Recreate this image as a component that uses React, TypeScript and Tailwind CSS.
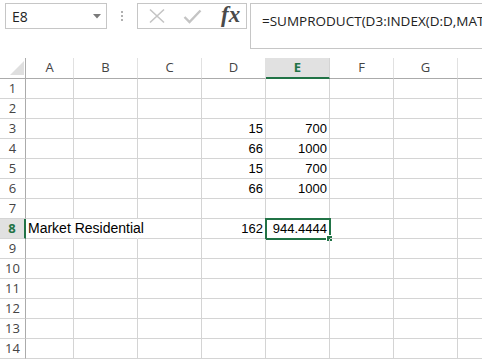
import React from "react";

const cols = ["A", "B", "C", "D", "E", "F", "G", "H"];
const widths = [48, 64, 64, 64, 64, 64, 64, 64];

type Cell = { text: string; align?: "left" | "right" };
const data: Record<number, Record<string, Cell>> = {
  3: { D: { text: "15", align: "right" }, E: { text: "700", align: "right" } },
  4: { D: { text: "66", align: "right" }, E: { text: "1000", align: "right" } },
  5: { D: { text: "15", align: "right" }, E: { text: "700", align: "right" } },
  6: { D: { text: "66", align: "right" }, E: { text: "1000", align: "right" } },
  8: {
    A: { text: "Market Residential", align: "left" },
    D: { text: "162", align: "right" },
    E: { text: "944.4444", align: "right" },
  },
};

const hdrFont = { fontFamily: '"Open Sans", "Noto Sans", sans-serif' };
const cellFont = { fontFamily: '"Liberation Sans", Arial, sans-serif' };

export default function App() {
  const rows = Array.from({ length: 14 }, (_, i) => i + 1);
  return (
    <div className="w-[482px] h-[359px] overflow-hidden bg-white relative">
      {/* toolbar */}
      <div className="h-[58px] flex items-start pt-[3px] pl-[5px]">
        <div className="shrink-0 w-[102px] h-[26px] border border-[#c6c6c6] flex items-center justify-between pl-[6px] pr-[5px]">
          <span className="text-[14px] text-[#222]" style={hdrFont}>E8</span>
          <svg width="8" height="5" viewBox="0 0 8 5"><path d="M0 0h8L4 4.5z" fill="#7a7a7a" /></svg>
        </div>
        <div className="shrink-0 w-[30px] h-[26px] flex flex-col items-center justify-center gap-[2px]">
          <div className="w-[2px] h-[2px] bg-[#b0b0b0]" />
          <div className="w-[2px] h-[2px] bg-[#b0b0b0]" />
          <div className="w-[2px] h-[2px] bg-[#b0b0b0]" />
        </div>
        <div className="shrink-0 w-[110px] h-[26px] border border-[#c6c6c6] flex items-center pl-[10px]">
          <svg className="shrink-0" width="18" height="16" viewBox="0 0 18 16"><path d="M2 1.5L16 14.5M16 1.5L2 14.5" stroke="#c4c4c4" strokeWidth="1.6" fill="none" /></svg>
          <svg className="shrink-0 ml-[17px]" width="19" height="16" viewBox="0 0 19 16"><path d="M1.5 9L6.5 14L17.5 2.5" stroke="#c4c4c4" strokeWidth="2.4" fill="none" /></svg>
          <span className="ml-[19px] text-[23px] italic font-bold text-[#4a4a4a] leading-none -mt-[3px]" style={{ fontFamily: '"Liberation Serif", "DejaVu Serif", serif' }}>fx</span>
        </div>
        <div className="ml-[3px] flex-1 min-w-0 h-[46px] border border-[#c6c6c6] border-r-0 pl-[11px] pt-[4px] overflow-hidden">
          <span className="text-[13.5px] text-[#222] whitespace-nowrap" style={hdrFont}>=SUMPRODUCT(D3:INDEX(D:D,MATC</span>
        </div>
      </div>

      {/* grid */}
      <div className="flex flex-col">
        <div className="flex h-[21px]">
          <div className="shrink-0 w-[26px] h-[21px] border-r border-b border-[#ababab] relative">
            <svg className="absolute left-[10px] top-[3px]" width="14" height="14" viewBox="0 0 14 14"><path d="M14 0V14H0z" fill="#dfdfdf" /></svg>
          </div>
          {cols.map((c, i) => (
            <div
              key={c}
              style={{ width: widths[i], ...hdrFont }}
              className={
                c === "E"
                  ? "shrink-0 h-[21px] bg-[#e1e1e1] border-r border-[#d4d4d4] border-b-2 border-b-[#217346] flex items-center justify-center text-[13px] font-bold text-[#217346]"
                  : "shrink-0 h-[21px] border-r border-[#e1e1e1] border-b border-b-[#ababab] flex items-center justify-center text-[13px] text-[#444]"
              }
            >
              {c === "H" ? "" : c}
            </div>
          ))}
        </div>
        {rows.map((r) => (
          <div key={r} className="flex h-[20px]">
            <div
              style={hdrFont}
              className={
                r === 8
                  ? "shrink-0 w-[26px] h-[20px] bg-[#e1e1e1] border-r-2 border-[#217346] border-b border-b-[#d4d4d4] flex items-center justify-center text-[13px] font-bold text-[#217346]"
                  : "shrink-0 w-[26px] h-[20px] border-r border-[#ababab] border-b border-b-[#d4d4d4] flex items-center justify-center text-[13px] text-[#444]"
              }
            >
              {r}
            </div>
            {cols.map((c, i) => {
              const cell = data[r]?.[c];
              const isNum = cell?.align === "right";
              const overflowed = r === 8 && (c === "A" || c === "B");
              return (
                <div
                  key={c}
                  style={{ width: widths[i], ...cellFont }}
                  className={
                    "shrink-0 h-[20px] border-b border-[#d4d4d4] flex items-center whitespace-nowrap text-black relative " +
                    (overflowed ? "border-r border-r-white " : "border-r ") +
                    (c === "A" && r === 8 ? "z-10 " : "") +
                    (isNum ? "justify-end pr-[2px] text-[13px]" : "justify-start pl-[2px] text-[14px]")
                  }
                >
                  {cell?.text}
                  {r === 8 && c === "E" && (
                    <div className="absolute -left-[1px] -top-[1px] w-[66px] h-[22px] border-2 border-[#217346]">
                      <div className="absolute -right-[4px] -bottom-[4px] w-[7px] h-[7px] bg-[#217346] border border-white" />
                    </div>
                  )}
                </div>
              );
            })}
          </div>
        ))}
      </div>
    </div>
  );
}
